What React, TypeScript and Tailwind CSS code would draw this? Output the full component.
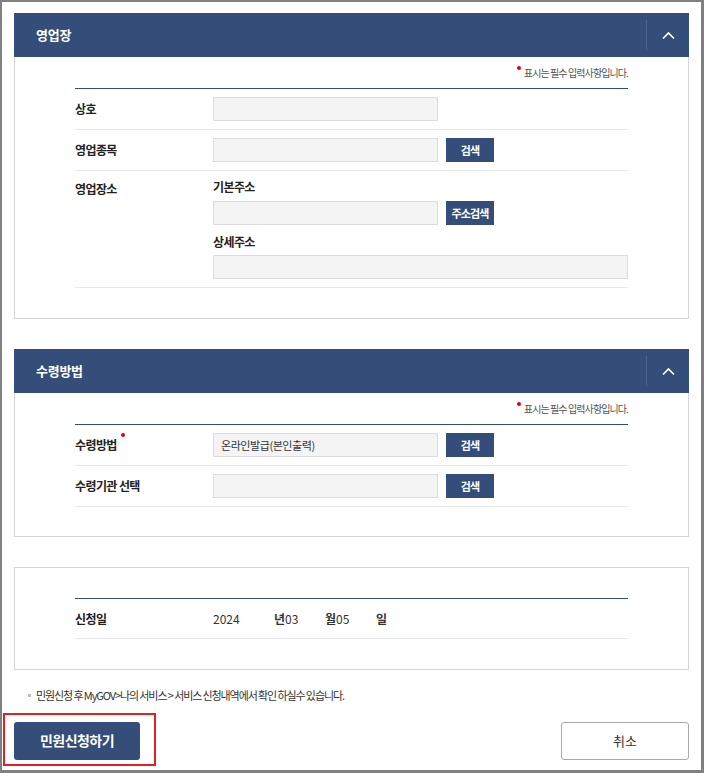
import type { ReactNode } from 'react'

const FONT = { fontFamily: '"Noto Sans CJK KR", "Noto Sans", sans-serif' }

function RedDot({ className = '' }: { className?: string }) {
  return <span className={`inline-block w-[4px] h-[4px] rounded-full bg-[#e60012] ${className}`} />
}

function ChevronUp() {
  return (
    <svg width="13" height="9" viewBox="0 0 13 9" fill="none">
      <path d="M1 7.5 L6.5 2 L12 7.5" stroke="white" strokeWidth="1.6" />
    </svg>
  )
}

function SectionHeader({ title }: { title: string }) {
  return (
    <div className="h-[44px] bg-[#344d79] flex items-center">
      <h2 className="flex-1 pl-[22px] text-white text-[13px] font-bold tracking-[-0.02em]">{title}</h2>
      <div className="w-[43px] h-[30px] border-l border-[#4d6390] flex items-center justify-center">
        <ChevronUp />
      </div>
    </div>
  )
}

function RequiredNote() {
  return (
    <div className="h-[31px] flex items-center justify-end">
      <RedDot className="mr-[3px] -mt-[10px]" />
      <span className="text-[10px] text-[#555] tracking-[-0.09em]">표시는 필수 입력사항입니다.</span>
    </div>
  )
}

function Input({ value, wide = false }: { value?: string; wide?: boolean }) {
  return (
    <div
      className={`h-[24px] bg-[#f4f4f4] border border-[#dcdcdc] flex items-center px-[7px] text-[11px] text-[#333] tracking-[-0.04em] ${
        wide ? 'w-full' : 'w-[225px]'
      }`}
    >
      {value}
    </div>
  )
}

function SmallButton({ children }: { children: ReactNode }) {
  return (
    <button className="h-[24px] w-[48px] bg-[#344d79] text-white text-[11px] font-bold tracking-[-0.08em]">
      {children}
    </button>
  )
}

function Row({ label, required, children, top = false }: { label: string; required?: boolean; children: ReactNode; top?: boolean }) {
  return (
    <div className={`flex border-b border-[#e8e8e8] ${top ? 'items-start' : 'items-center'}`}>
      <div className={`w-[138px] shrink-0 flex text-[12px] font-bold text-[#222] tracking-[-0.05em] ${top ? 'pt-[9px]' : ''}`}>
        {label}
        {required && <RedDot className="ml-[4px] mt-[-3px]" />}
      </div>
      <div className="flex-1">{children}</div>
    </div>
  )
}

export default function App() {
  return (
    <div style={FONT} className="h-[773px] bg-white border-l-2 border-t-2 border-r-[3px] border-b-[3px] border-[#808080] px-[12px] pt-[11px]">
      {/* 영업장 */}
      <section>
        <SectionHeader title="영업장" />
        <div className="border-x border-b border-[#d5d5d5] px-[60px] pb-[30px]">
          <RequiredNote />
          <div className="border-t border-[#344d79]">
            <Row label="상호">
              <div className="py-[8px]">
                <Input />
              </div>
            </Row>
            <Row label="영업종목">
              <div className="py-[8px] flex gap-[8px]">
                <Input />
                <SmallButton>검색</SmallButton>
              </div>
            </Row>
            <Row label="영업장소" top>
              <div className="pt-[9px] pb-[8px]">
                <div className="text-[12px] font-bold text-[#222] leading-[14px] tracking-[-0.05em]">기본주소</div>
                <div className="mt-[7px] flex gap-[8px]">
                  <Input />
                  <SmallButton>주소검색</SmallButton>
                </div>
                <div className="mt-[10px] text-[12px] font-bold text-[#222] leading-[14px] tracking-[-0.05em]">상세주소</div>
                <div className="mt-[6px]">
                  <Input wide />
                </div>
              </div>
            </Row>
          </div>
        </div>
      </section>

      {/* 수령방법 */}
      <section className="mt-[30px]">
        <SectionHeader title="수령방법" />
        <div className="border-x border-b border-[#d5d5d5] px-[60px] pb-[29px]">
          <RequiredNote />
          <div className="border-t border-[#344d79]">
            <Row label="수령방법" required>
              <div className="py-[8px] flex gap-[8px]">
                <Input value="온라인발급(본인출력)" />
                <SmallButton>검색</SmallButton>
              </div>
            </Row>
            <Row label="수령기관 선택">
              <div className="py-[8px] flex gap-[8px]">
                <Input />
                <SmallButton>검색</SmallButton>
              </div>
            </Row>
          </div>
        </div>
      </section>

      {/* 신청일 */}
      <section className="mt-[30px] border border-[#d5d5d5] px-[60px] pt-[30px] pb-[30px]">
        <div className="border-t border-[#344d79]">
          <Row label="신청일">
            <div className="h-[39px] flex items-center text-[12px] text-[#333]">
              <span className="w-[61px]">2024</span>
              <span className="w-[51px]">
                <b className="font-bold">년</b>03
              </span>
              <span className="w-[51px]">
                <b className="font-bold">월</b>05
              </span>
              <b className="font-bold">일</b>
            </div>
          </Row>
        </div>
      </section>

      {/* 안내 */}
      <p className="mt-[17px] pl-[14px] flex items-center text-[11px] text-[#333] tracking-[-0.1em]">
        <span className="w-[3px] h-[3px] bg-[#bbb] mr-[5px]" />
        민원신청 후 MyGOV&gt;나의 서비스 &gt; 서비스 신청내역에서 확인 하실수 있습니다.
      </p>

      <div className="mt-[18px] flex justify-between">
        <div className="relative">
          <button className="h-[38px] w-[126px] rounded-[3px] bg-[#344d79] text-white text-[14px] font-bold tracking-[-0.04em]">
            민원신청하기
          </button>
          <div className="absolute left-[-11px] top-[-9px] right-[-16px] bottom-[-6px] border-2 border-[#e81e25] pointer-events-none" />
        </div>
        <button className="h-[38px] w-[128px] rounded-[3px] bg-white border border-[#a9a9a9] text-[13px] text-[#333]">
          취소
        </button>
      </div>
    </div>
  )
}
